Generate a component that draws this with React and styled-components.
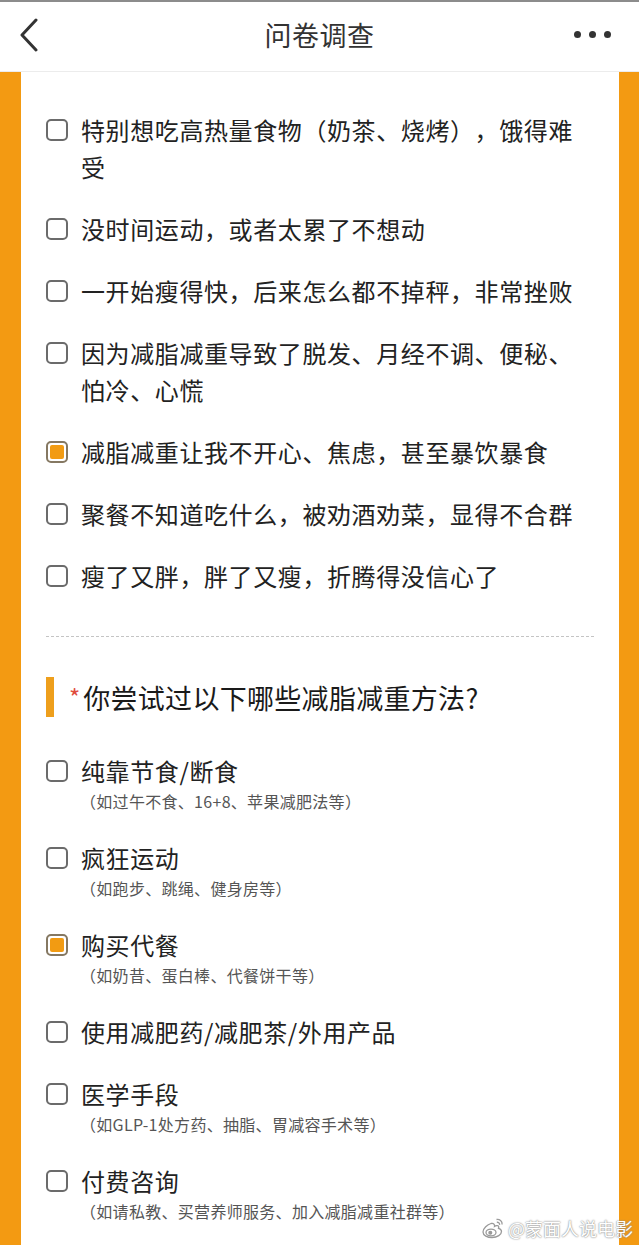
import React from "react";
import styled, { createGlobalStyle } from "styled-components";

const Global = createGlobalStyle`
  html, body { margin: 0; padding: 0; background: #fff; }
  body {
    width: 639px;
    height: 1245px;
    overflow: hidden;
    font-family: "Noto Sans CJK SC", "Noto Sans", sans-serif;
    text-spacing-trim: space-all;
  }
`;

const Page = styled.div`
  width: 639px;
  height: 1245px;
  display: flex;
  flex-direction: column;
  position: relative;
  overflow: hidden;
`;

const Header = styled.header`
  flex: none;
  border-top: 2px solid #8c8c8c;
  border-bottom: 1px solid #ececec;
  box-sizing: border-box;
  height: 72px;
  padding-bottom: 4px;
  display: grid;
  grid-template-columns: 80px 1fr 80px;
  align-items: center;
  background: #fff;
`;

const Back = styled.div`
  padding-left: 18px;
  display: flex;
  align-items: center;
`;

const Title = styled.div`
  text-align: center;
  font-size: 27px;
  color: #333;
  letter-spacing: 0.5px;
`;

const More = styled.div`
  display: flex;
  justify-content: flex-end;
  gap: 8px;
  padding-right: 28px;
`;

const Dot = styled.span`
  width: 7px;
  height: 7px;
  border-radius: 50%;
  background: #333;
`;

const Main = styled.main`
  flex: 1;
  background: #f39a12;
  padding: 0 20px 0 21px;
  display: flex;
`;

const Card = styled.section`
  flex: 1;
  background: #fff;
  padding: 39px 25px 0 25px;
  display: flex;
  flex-direction: column;
`;

const List = styled.div`
  display: flex;
  flex-direction: column;
  gap: 25px;
`;

const Item = styled.div`
  display: flex;
  align-items: flex-start;
  gap: 13px;
`;

const Box = styled.span`
  flex: none;
  width: 22px;
  height: 22px;
  margin-top: 8px;
  box-sizing: border-box;
  border: 2px solid ${(p) => (p.$checked ? "#857862" : "#6b6b6b")};
  border-radius: 5px;
  padding: 2px;
  display: flex;
  &::after {
    content: "";
    flex: 1;
    border-radius: 2px;
    background: ${(p) => (p.$checked ? "#f29b12" : "transparent")};
  }
`;

const Texts = styled.div`
  display: flex;
  flex-direction: column;
  min-width: 0;
`;

const Label = styled.div`
  font-size: 24px;
  line-height: 37px;
  letter-spacing: 0.6px;
  color: #222;
`;

const Sub = styled.div`
  font-size: 16px;
  line-height: 25px;
  letter-spacing: 0.3px;
  color: #555;
  margin-left: -1px;
`;

const Divider = styled.hr`
  border: none;
  border-top: 1px dashed #c4c4c4;
  margin: 42px 0 40px;
  height: 0;
`;

const QHead = styled.div`
  display: flex;
  align-items: center;
  height: 40px;
  margin-bottom: 35px;
`;

const Bar = styled.span`
  width: 8px;
  height: 40px;
  background: #ee9f1c;
  margin-right: 15px;
`;

const Star = styled.span`
  color: #e04b3c;
  font-size: 24px;
  margin-right: 3px;
  align-self: flex-start;
  margin-top: 2px;
`;

const QText = styled.span`
  font-size: 27px;
  color: #1a1a1a;
  letter-spacing: 0.3px;
`;

const Watermark = styled.div`
  position: absolute;
  right: 6px;
  bottom: 4px;
  display: flex;
  align-items: center;
  gap: 3px;
  color: #fff;
  font-size: 18px;
  text-shadow: 0 0 2px #8a8a8a, 0 0 1px #999;
`;

const first = [
  { t: "特别想吃高热量食物（奶茶、烧烤），饿得难受" },
  { t: "没时间运动，或者太累了不想动" },
  { t: "一开始瘦得快，后来怎么都不掉秤，非常挫败" },
  { t: "因为减脂减重导致了脱发、月经不调、便秘、怕冷、心慌" },
  { t: "减脂减重让我不开心、焦虑，甚至暴饮暴食", c: true },
  { t: "聚餐不知道吃什么，被劝酒劝菜，显得不合群" },
  { t: "瘦了又胖，胖了又瘦，折腾得没信心了" },
];

const second = [
  { t: "纯靠节食/断食", s: "（如过午不食、16+8、苹果减肥法等）" },
  { t: "疯狂运动", s: "（如跑步、跳绳、健身房等）" },
  { t: "购买代餐", s: "（如奶昔、蛋白棒、代餐饼干等）", c: true },
  { t: "使用减肥药/减肥茶/外用产品" },
  { t: "医学手段", s: "（如GLP-1处方药、抽脂、胃减容手术等）" },
  { t: "付费咨询", s: "（如请私教、买营养师服务、加入减脂减重社群等）" },
];

function Option({ t, s, c }) {
  return (
    <Item>
      <Box $checked={c} />
      <Texts>
        <Label>{t}</Label>
        {s && <Sub>{s}</Sub>}
      </Texts>
    </Item>
  );
}

function WeiboLogo() {
  return (
    <svg width="24" height="22" viewBox="0 0 24 22">
      <g fill="#fff" stroke="#9a9a9a" strokeWidth="1.3">
        <path d="M10 6.5c-3.5 1-8 5-8 8.5 0 3.5 4.5 5.5 9 5.5 5.5 0 9.5-3 9.5-6 0-1.8-1.6-2.8-3-3.2 0.6-1.6 0.2-3-1.8-2.6-1.2 0.3-2.2 0.8-2.2 0.8 0.3-1.6-0.6-3.8-3.5-3z" />
        <ellipse cx="10" cy="15.5" rx="5" ry="3.3" />
        <circle cx="9.3" cy="15.8" r="1.4" fill="#9a9a9a" />
        <path d="M15.5 2.5c3-0.6 6 1.8 5.6 5" fill="none" />
        <path d="M15.8 5.3c1.5-0.3 3 0.9 2.8 2.5" fill="none" />
      </g>
    </svg>
  );
}

export default function App() {
  return (
    <Page>
      <Global />
      <Header>
        <Back>
          <svg width="22" height="34" viewBox="0 0 22 34">
            <path d="M18 2 L4 17 L18 32" fill="none" stroke="#333" strokeWidth="3" strokeLinecap="round" strokeLinejoin="round" />
          </svg>
        </Back>
        <Title>问卷调查</Title>
        <More>
          <Dot />
          <Dot />
          <Dot />
        </More>
      </Header>
      <Main>
        <Card>
          <List>
            {first.map((o) => (
              <Option key={o.t} {...o} />
            ))}
          </List>
          <Divider />
          <QHead>
            <Bar />
            <Star>*</Star>
            <QText>你尝试过以下哪些减脂减重方法?</QText>
          </QHead>
          <List>
            {second.map((o) => (
              <Option key={o.t} {...o} />
            ))}
          </List>
        </Card>
      </Main>
      <Watermark>
        <WeiboLogo />
        <span>@蒙面人说电影</span>
      </Watermark>
    </Page>
  );
}
